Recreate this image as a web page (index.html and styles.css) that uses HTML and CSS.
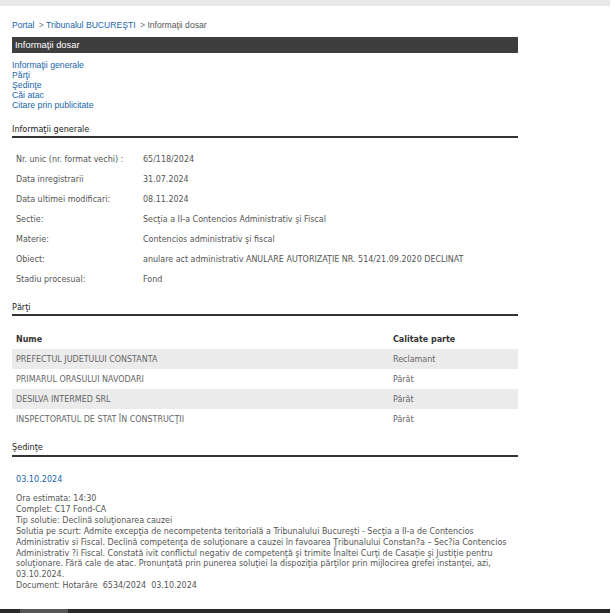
FILE: index.html
```html
<!DOCTYPE html>
<html lang="ro">
<head>
  <meta charset="UTF-8">
  <title>Informaţii dosar</title>
  <link rel="stylesheet" href="styles.css">
</head>
<body>
  <div class="topbar"></div>
  <div class="page">
    <div class="crumbs">
      <a href="#">Portal</a> <span class="sep">&gt;</span> <a href="#">Tribunalul BUCUREŞTI</a> <span class="sep">&gt;</span> Informaţii dosar
    </div>
    <div class="title-bar">Informaţii dosar</div>
    <ul class="toc">
      <li><a href="#gen">Informaţii generale</a></li>
      <li><a href="#parti">Părţi</a></li>
      <li><a href="#sed">Şedinţe</a></li>
      <li><a href="#cai">Căi atac</a></li>
      <li><a href="#cit">Citare prin publicitate</a></li>
    </ul>

    <h2 class="section" id="gen">Informaţii generale</h2>
    <table class="info">
      <tr><td class="lbl">Nr. unic (nr. format vechi) :</td><td>65/118/2024</td></tr>
      <tr><td class="lbl">Data inregistrarii</td><td>31.07.2024</td></tr>
      <tr><td class="lbl">Data ultimei modificari:</td><td>08.11.2024</td></tr>
      <tr><td class="lbl">Sectie:</td><td>Secţia a II-a Contencios Administrativ şi Fiscal</td></tr>
      <tr><td class="lbl">Materie:</td><td>Contencios administrativ şi fiscal</td></tr>
      <tr><td class="lbl">Obiect:</td><td>anulare act administrativ ANULARE AUTORIZAŢIE NR. 514/21.09.2020 DECLINAT</td></tr>
      <tr><td class="lbl">Stadiu procesual:</td><td>Fond</td></tr>
    </table>

    <h2 class="section" id="parti">Părţi</h2>
    <table class="parti">
      <tr><th>Nume</th><th class="col2">Calitate parte</th></tr>
      <tr class="odd"><td>PREFECTUL JUDETULUI CONSTANTA</td><td class="col2">Reclamant</td></tr>
      <tr><td>PRIMARUL ORASULUI NAVODARI</td><td class="col2">Pârât</td></tr>
      <tr class="odd"><td>DESILVA INTERMED SRL</td><td class="col2">Pârât</td></tr>
      <tr><td>INSPECTORATUL DE STAT ÎN CONSTRUCŢII</td><td class="col2">Pârât</td></tr>
    </table>

    <h2 class="section" id="sed">Şedinţe</h2>
    <div class="sedinta">
      <div class="date">03.10.2024</div>
      <p>
        Ora estimata: 14:30<br>
        Complet: C17 Fond-CA<br>
        Tip solutie: Declină soluţionarea cauzei<br>
        Solutia pe scurt: Admite excepţia de necompetenta teritorială a Tribunalului Bucureşti - Secţia a II-a de Contencios<br>
        Administrativ si Fiscal. Declină competenţa de soluţionare a cauzei în favoarea Ţribunalului Constan?a – Sec?ia Contencios<br>
        Administrativ ?i Fiscal. Constată ivit conflictul negativ de competenţă şi trimite Înaltei Curţi de Casaţie şi Justiţie pentru<br>
        soluţionare. Fără cale de atac. Pronunţată prin punerea soluţiei la dispoziţia părţilor prin mijlocirea grefei instanţei, azi,<br>
        03.10.2024.<br>
        Document: Hotarâre&nbsp; 6534/2024&nbsp; 03.10.2024
      </p>
    </div>
  </div>
  <div class="footer"><span class="tab"></span></div>
</body>
</html>
```

FILE: styles.css
```css
body { margin: 0; background: #fff; font-family: "Liberation Sans", Arial, sans-serif; color: #444; }
a { color: #2266aa; text-decoration: none; }
.topbar { height: 6px; width: 610px; background: #e8e8e8; }
.page { width: 506px; padding: 0 0 0 12px; }
.crumbs { font-size: 8.6px; color: #555; margin-top: 13px; height: 12px; line-height: 12px; }
.crumbs .sep { color: #777; margin-left: 2px; }
.title-bar { margin-top: 6px; height: 16px; line-height: 16px; background: #3e3e3e; color: #fff; font-size: 9.4px; padding-left: 3px; }
.toc { list-style: none; margin: 7px 0 0; padding: 0; font-size: 8.7px; line-height: 10px; }

.section, .info, .parti, .sedinta { font-family: "DejaVu Sans Condensed", "DejaVu Sans", sans-serif; font-stretch: condensed; }
.section { font-size: 9px; line-height: 12px; font-weight: normal; color: #222; margin: 0; padding: 0 0 1px; border-bottom: 2px solid #333; }
#gen { margin-top: 13px; }
#parti { margin-top: 12px; }
#sed { margin-top: 12px; padding-bottom: 2px; }

.info { border-collapse: collapse; font-size: 8.9px; color: #555; margin-top: 11px; }
.info td { height: 20px; padding: 0; vertical-align: middle; }
.info .lbl { width: 127px; padding-left: 4px; }

.parti { width: 506px; border-collapse: collapse; font-size: 8.9px; color: #666; margin-top: 13px; }
.parti th { text-align: left; font-weight: bold; color: #333; height: 20px; padding: 0 0 0 4px; }
.parti td { height: 20px; padding: 0 0 0 4px; }
.parti .col2 { width: 125px; padding-left: 0; }
.parti .odd td { background: #ebebeb; }

.sedinta { padding: 17px 4px 0; font-size: 8.9px; color: #555; }
.sedinta .date { color: #2266aa; font-size: 9px; line-height: 10px; }
.sedinta p { margin: 9px 0 0; line-height: 10.9px; white-space: nowrap; }

.footer { margin-top: 18px; width: 610px; height: 6px; background: #2a2a2a; }
.footer .tab { display: block; margin-left: 20px; width: 48px; height: 6px; background: #555; }
```
